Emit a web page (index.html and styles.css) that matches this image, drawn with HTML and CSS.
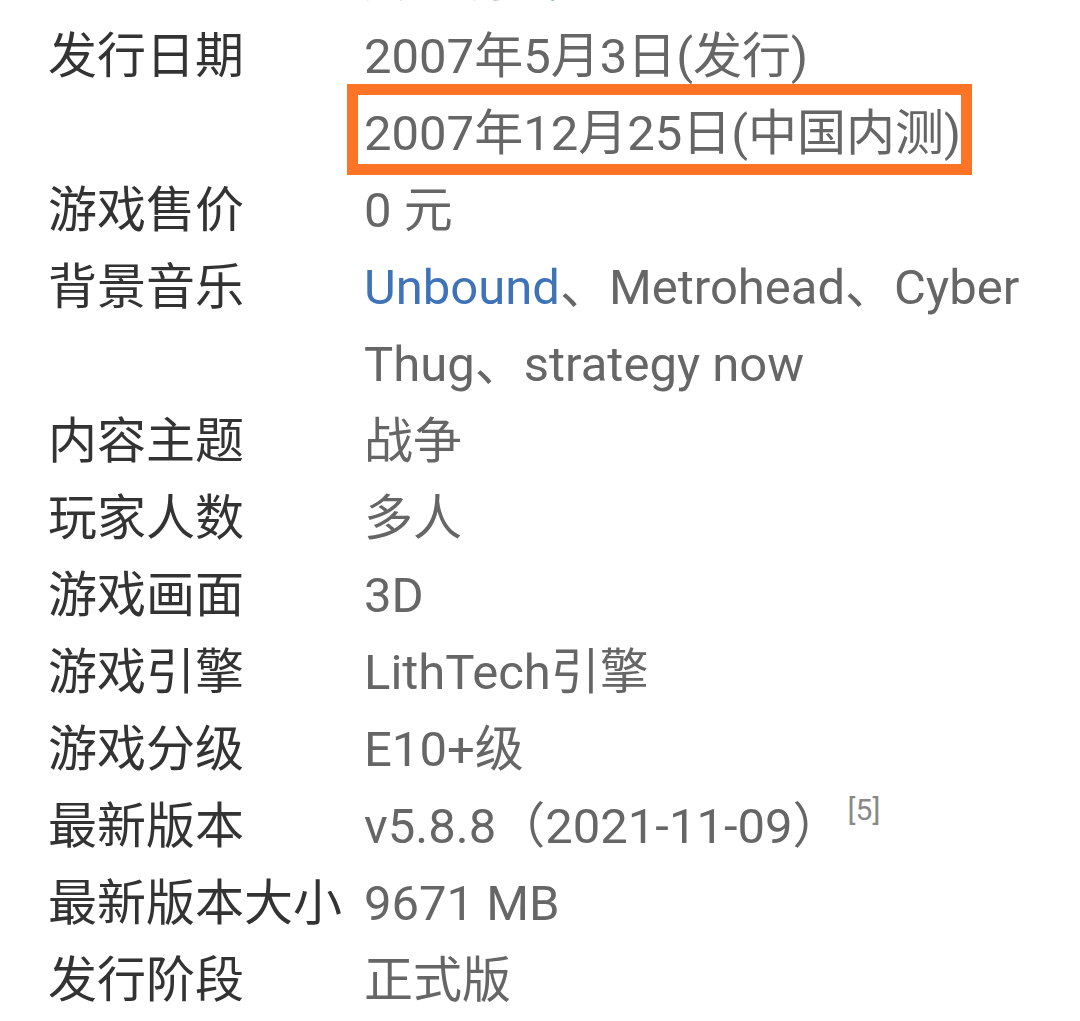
FILE: index.html
```html
<!DOCTYPE html>
<html lang="zh-CN">
<head>
    <meta charset="UTF-8">
    <meta name="viewport" content="width=device-width, initial-scale=1.0">
    <title>游戏信息</title>
    <link rel="stylesheet" href="styles.css">
</head>
<body>
    <!-- Infobox -->
    <div class="infobox">
        <div class="label">运营商</div>
        <div class="value">
            <a class="link" href="#">Smilegate</a><br>
            <a class="link" href="#">腾讯游戏</a>
        </div>

        <div class="label">发行日期</div>
        <div class="value">
            2007年5月3日(发行)<br>
            <span class="marked">2007年12月25日(中国内测)</span>
        </div>

        <div class="label">游戏售价</div>
        <div class="value">0 元</div>

        <div class="label">背景音乐</div>
        <div class="value"><a class="link" href="#">Unbound</a>、Metrohead、Cyber Thug、strategy now</div>

        <div class="label">内容主题</div>
        <div class="value">战争</div>

        <div class="label">玩家人数</div>
        <div class="value">多人</div>

        <div class="label">游戏画面</div>
        <div class="value">3D</div>

        <div class="label">游戏引擎</div>
        <div class="value">LithTech引擎</div>

        <div class="label">游戏分级</div>
        <div class="value">E10+级</div>

        <div class="label">最新版本</div>
        <div class="value">v5.8.8（2021-11-09）<sup class="ref">[5]</sup></div>

        <div class="label">最新版本大小</div>
        <div class="value">9671 MB</div>

        <div class="label">发行阶段</div>
        <div class="value">正式版</div>
    </div>
</body>
</html>
```

FILE: styles.css
```css
/* General Styling */
body {
    margin: 0;
    padding: 0;
    background: #fff;
    font-family: 'Roboto', 'Noto Sans CJK SC', sans-serif;
    font-size: 49px;
    line-height: 77px;
    overflow: hidden;
}

/* Infobox */
.infobox {
    display: grid;
    grid-template-columns: 316px 1fr;
    margin-top: -136px;
    padding: 0 36px 0 48px;
}
.label {
    color: #333;
    white-space: nowrap;
}
.value {
    color: #666;
}
.link {
    color: #3f73b8;
    text-decoration: none;
}

/* Orange highlight box */
.marked {
    display: inline-block;
    line-height: 55px;
    padding: 11px 0 3px 6px;
    margin-left: -6px;
    outline: 11px solid #fd7427;
}

/* Reference mark */
.ref {
    font-size: 30px;
    color: #888;
    vertical-align: 23px;
    line-height: 0;
    margin-left: 6px;
}
```
